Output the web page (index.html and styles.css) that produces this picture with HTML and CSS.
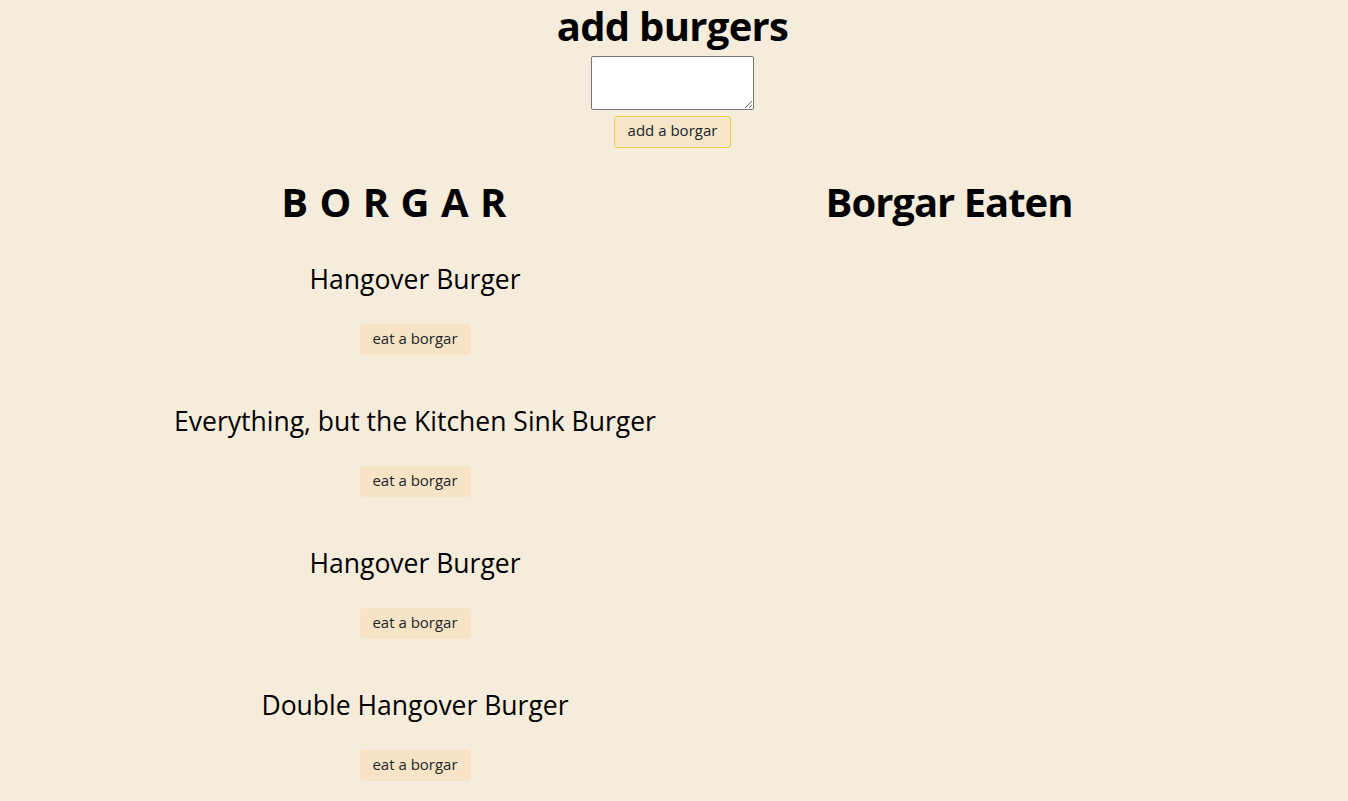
FILE: index.html
```html
<!DOCTYPE html>
<html lang="en">
<head>
<meta charset="utf-8">
<title>Borgar</title>
<link rel="stylesheet" href="styles.css">
</head>
<body>
<header class="add">
  <h1 class="add-title">add burgers</h1>
  <form class="add-form">
    <textarea class="add-input" name="burger"></textarea>
    <button type="button" class="btn btn-add">add a borgar</button>
  </form>
</header>
<main class="columns">
  <section class="col">
    <h1 class="col-title col-title-spaced">BORGAR</h1>
    <ul class="burgers">
      <li class="burger">
        <h3 class="burger-name">Hangover Burger</h3>
        <button type="button" class="btn btn-eat">eat a borgar</button>
      </li>
      <li class="burger">
        <h3 class="burger-name">Everything, but the Kitchen Sink Burger</h3>
        <button type="button" class="btn btn-eat">eat a borgar</button>
      </li>
      <li class="burger">
        <h3 class="burger-name">Hangover Burger</h3>
        <button type="button" class="btn btn-eat">eat a borgar</button>
      </li>
      <li class="burger">
        <h3 class="burger-name">Double Hangover Burger</h3>
        <button type="button" class="btn btn-eat">eat a borgar</button>
      </li>
    </ul>
  </section>
  <section class="col">
    <h1 class="col-title col-title-tight">Borgar Eaten</h1>
    <ul class="burgers"></ul>
  </section>
</main>
</body>
</html>
```
FILE: styles.css
```css
html, body {
  margin: 0;
  padding: 0;
}
body {
  background: #f5ecdb;
  color: #000;
  font-family: "Open Sans", "Noto Sans", sans-serif;
  min-height: 801px;
}
.add {
  text-align: center;
  padding: 2px 3px 0 0;
}
.add-title {
  margin: 0;
  font-size: 40px;
  line-height: 48px;
  font-weight: 700;
  letter-spacing: -0.7px;
}
.add-form {
  display: flex;
  flex-direction: column;
  align-items: center;
  gap: 6px;
  margin-top: 6px;
}
.add-input {
  display: block;
  box-sizing: border-box;
  width: 163px;
  height: 54px;
  margin: 0;
  border: 1px solid #767676;
  border-radius: 2px;
  background: #fff;
}
.btn {
  font-family: "Open Sans", "Noto Sans", sans-serif;
  box-sizing: border-box;
  border-radius: 3px;
  cursor: pointer;
  color: #212529;
}
.btn-add {
  height: 32px;
  width: 117px;
  padding: 0 0 4px;
  font-size: 15px;
  background: #f7e6c9;
  border: 1px solid #f2c94c;
}
.columns {
  display: grid;
  grid-template-columns: 1fr 1fr;
  width: 1100px;
  margin: 30px auto 0;
}
.col {
  text-align: center;
}
.col-title {
  margin: 0;
  font-size: 40px;
  line-height: 48px;
  font-weight: 700;
}
.col-title-spaced {
  letter-spacing: 11.4px;
  padding-left: 1px;
}
.col-title-tight {
  letter-spacing: -1px;
}
.burgers {
  list-style: none;
  margin: 36px 0 0;
  padding: 0 0 0 32px;
}
.burger {
  margin-bottom: 49px;
}
.burger-name {
  margin: 0 0 28px;
  font-size: 26.5px;
  line-height: 34px;
  font-weight: 400;
}
.btn-eat {
  height: 31px;
  width: 111px;
  padding: 0 0 4px;
  font-size: 15px;
  background: #f7e4c6;
  border: 1px solid #f7e4c6;
}
```
